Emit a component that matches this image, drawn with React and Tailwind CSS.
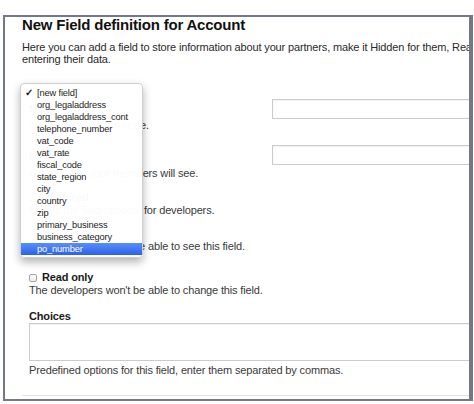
const fieldOptions = [
  '[new field]',
  'org_legaladdress',
  'org_legaladdress_cont',
  'telephone_number',
  'vat_code',
  'vat_rate',
  'fiscal_code',
  'state_region',
  'city',
  'country',
  'zip',
  'primary_business',
  'business_category',
  'po_number',
]

function CheckRow({ label, hint, className }) {
  return (
    <div className={className}>
      <div className="flex h-[13px] items-center">
        <span className="mr-[5px] h-[8px] w-[8px] rounded-[2px] border border-[#a5a5a5] bg-gradient-to-b from-white to-[#ececec]" />
        <span className="font-bold text-[#1a1a1a]">{label}</span>
      </div>
      <p>{hint}</p>
    </div>
  )
}

function FieldMenu() {
  return (
    <div className="absolute left-[20px] top-[83px] w-[123px] rounded-[4px] border border-[#cfcfcf] bg-white/[0.975] pb-[2px] pt-[3px] text-[9.3px] text-[#1e1e1e] shadow-[0_4px_9px_rgba(0,0,0,0.3)]">
      {fieldOptions.map((opt, i) => {
        const active = opt === 'po_number'
        return (
          <div
            key={opt}
            className={
              active
                ? 'relative flex h-[12px] items-center bg-gradient-to-b from-[#5b8df8] to-[#2b62ea] pl-[16px] leading-[12px] text-white'
                : 'relative flex h-[12px] items-center pl-[16px] leading-[12px]'
            }
          >
            {i === 0 ? <span className="absolute left-[4px] top-0 text-[10px] font-bold">✓</span> : null}
            {opt}
          </div>
        )
      })}
    </div>
  )
}

export default function App() {
  return (
    <div className="relative h-[404px] w-[474px] overflow-hidden bg-white font-['Liberation_Sans',Arial,sans-serif] text-[11px] leading-[13px] tracking-[-0.15px] text-[#3a3a3a]">
      <div className="ml-[3px] mt-[15px] h-[386px] w-[470px] overflow-hidden border-2 border-r-4 border-[#72778a]">
        <div className="w-[720px] pl-[17px]">
          <h1 className="text-[15px] font-bold leading-[15px] tracking-[-0.2px] text-[#111]">New Field definition for Account</h1>
          <p className="mt-[9px] whitespace-nowrap leading-[12px] text-[#2a2a2a]">
            Here you can add a field to store information about your partners, make it Hidden for them, Read only or Required when
            <br />
            entering their data.
          </p>

          <div className="pl-[7px]">
            <div className="mt-[34px] flex h-[20px] items-center">
              <span className="w-[243px] font-bold text-[#1a1a1a]">Name</span>
              <div className="h-[20px] w-[300px] border border-[#cbcbcb] bg-white shadow-[inset_0_1px_2px_rgba(0,0,0,0.06)]" />
            </div>
            <p>Unique key used in code.</p>

            <div className="mt-[13px] flex h-[20px] items-center">
              <span className="w-[243px] font-bold text-[#1a1a1a]">Label</span>
              <div className="h-[20px] w-[300px] border border-[#cbcbcb] bg-white shadow-[inset_0_1px_2px_rgba(0,0,0,0.06)]" />
            </div>
            <p className="mt-[2px]">A name that your members will see.</p>

            <CheckRow className="mt-[11px]" label="Required" hint="Makes the field optional for developers." />
            <CheckRow className="mt-[10px]" label="Hidden" hint="The developers won't be able to see this field." />
            <CheckRow className="mt-[18px]" label="Read only" hint="The developers won't be able to change this field." />

            <p className="mt-[13px] font-bold text-[#1a1a1a]">Choices</p>
            <div className="h-[38px] w-[600px] border border-[#cbcbcb] bg-white shadow-[inset_0_1px_2px_rgba(0,0,0,0.06)]" />
            <p className="mt-[3px]">Predefined options for this field, enter them separated by commas.</p>
          </div>

          <div className="mt-[18px] border-t border-[#e2e2e2]" />
        </div>
      </div>
      <FieldMenu />
    </div>
  )
}
